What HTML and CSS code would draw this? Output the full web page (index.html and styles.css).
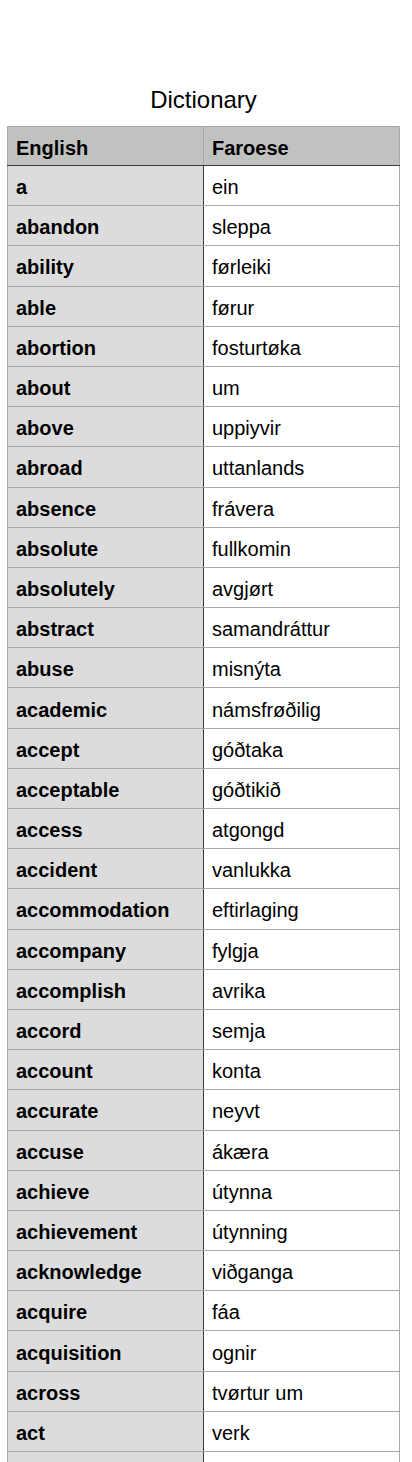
FILE: index.html
```html
<!DOCTYPE html>
<html>
<head>
<meta charset="utf-8">
<link rel="stylesheet" href="styles.css">
</head>
<body>
<div class="page">
  <h1 class="title">Dictionary</h1>
  <table class="dict">
    <thead>
      <tr><th>English</th><th>Faroese</th></tr>
    </thead>
    <tbody>
      <tr><td>a</td><td>ein</td></tr>
      <tr><td>abandon</td><td>sleppa</td></tr>
      <tr><td>ability</td><td>førleiki</td></tr>
      <tr><td>able</td><td>førur</td></tr>
      <tr><td>abortion</td><td>fosturtøka</td></tr>
      <tr><td>about</td><td>um</td></tr>
      <tr><td>above</td><td>uppiyvir</td></tr>
      <tr><td>abroad</td><td>uttanlands</td></tr>
      <tr><td>absence</td><td>frávera</td></tr>
      <tr><td>absolute</td><td>fullkomin</td></tr>
      <tr><td>absolutely</td><td>avgjørt</td></tr>
      <tr><td>abstract</td><td>samandráttur</td></tr>
      <tr><td>abuse</td><td>misnýta</td></tr>
      <tr><td>academic</td><td>námsfrøðilig</td></tr>
      <tr><td>accept</td><td>góðtaka</td></tr>
      <tr><td>acceptable</td><td>góðtikið</td></tr>
      <tr><td>access</td><td>atgongd</td></tr>
      <tr><td>accident</td><td>vanlukka</td></tr>
      <tr><td>accommodation</td><td>eftirlaging</td></tr>
      <tr><td>accompany</td><td>fylgja</td></tr>
      <tr><td>accomplish</td><td>avrika</td></tr>
      <tr><td>accord</td><td>semja</td></tr>
      <tr><td>account</td><td>konta</td></tr>
      <tr><td>accurate</td><td>neyvt</td></tr>
      <tr><td>accuse</td><td>ákæra</td></tr>
      <tr><td>achieve</td><td>útynna</td></tr>
      <tr><td>achievement</td><td>útynning</td></tr>
      <tr><td>acknowledge</td><td>viðganga</td></tr>
      <tr><td>acquire</td><td>fáa</td></tr>
      <tr><td>acquisition</td><td>ognir</td></tr>
      <tr><td>across</td><td>tvørtur um</td></tr>
      <tr><td>act</td><td>verk</td></tr>
      <tr><td></td><td></td></tr>
    </tbody>
  </table>
</div>
</body>
</html>
```

FILE: styles.css
```css
html, body {
  margin: 0;
  padding: 0;
  background: #ffffff;
}
body {
  font-family: "Liberation Sans", Arial, Helvetica, sans-serif;
  color: #000;
}
.page {
  padding: 82px 12px 0 7px;
}
.title {
  margin: 0 0 9px 0;
  font-size: 24px;
  font-weight: normal;
  text-align: center;
  line-height: 35px;
  height: 35px;
}
.dict {
  width: 393px;
  border-collapse: collapse;
  table-layout: fixed;
  border: 1px solid #a9a9a9;
}
.dict th,
.dict td {
  text-align: left;
  padding: 4px 8px 0 8px;
  height: 35.2px;
  font-size: 20px;
  border: 1px solid #a9a9a9;
  vertical-align: middle;
}
.dict th {
  height: 34px;
  background: #c0c2c0;
  font-weight: bold;
  border-bottom: 1px solid #3a3a3a;
}
.dict td:first-child {
  background: #dcdcdc;
  font-weight: bold;
  border-right: 1px solid #3a3a3a;
}
.dict td:last-child {
  background: #ffffff;
}
```
